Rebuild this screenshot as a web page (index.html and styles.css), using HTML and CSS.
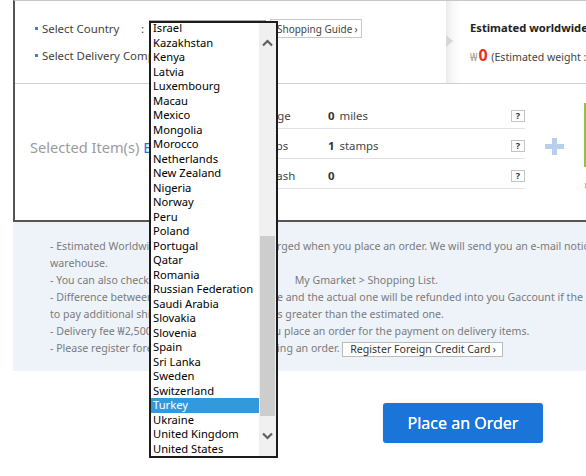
FILE: index.html
```html
<!DOCTYPE html>
<html lang="en">
<head>
<meta charset="utf-8">
<title>Order</title>
<link rel="stylesheet" href="styles.css">
</head>
<body>
<div class="page">
  <div class="order-box">
    <div class="top">
      <div class="select-area">
        <div class="sel-row">
          <span class="bullet"></span><span class="sel-label">Select Country</span><span class="colon">:</span>
          <span class="select-ph">Turkey</span>
          <span class="btn-small guide">Shopping Guide<span class="chev">›</span></span>
        </div>
        <div class="sel-row">
          <span class="bullet"></span><span class="sel-label">Select Delivery Company</span>
        </div>
      </div>
      <div class="estimate">
        <div class="est-title">Estimated worldwide shipping fee</div>
        <div class="est-value"><span class="won">₩</span><span class="zero">0</span> (Estimated weight : 0kg)</div>
      </div>
    </div>
    <div class="middle">
      <div class="selected">Selected Item(s) <span class="blue">E</span></div>
      <div class="benefits">
        <div class="brow"><span class="blabel">G Mileage</span><span class="bval"><b>0</b> miles</span><span class="qbox">?</span></div>
        <div class="brow"><span class="blabel">G Stamps</span><span class="bval"><b>1</b> stamps</span><span class="qbox">?</span></div>
        <div class="brow"><span class="blabel">Smile Cash</span><span class="bval"><b>0</b></span><span class="qbox">?</span></div>
      </div>
      <svg class="plus" width="19" height="17" viewBox="0 0 19 17"><rect x="0" y="6" width="19" height="5" fill="#b7cfe8"/><rect x="7" y="0" width="5" height="17" fill="#b7cfe8"/></svg>
      <div class="side">
        <div class="green-box"></div>
        <div class="side-note">₩0</div>
      </div>
    </div>
  </div>

  <div class="notice">
    <div class="nline">- Estimated Worldwide delivery fee will be charged when you place an order. We will send you an e-mail notice when the items arrive at the overseas</div>
    <div class="nline">warehouse.</div>
    <div class="nline">- You can also check the shipping fee later in <span class="path">My Gmarket &gt; Shopping List.</span></div>
    <div class="nline">- Difference between the predicted delivery fee and the actual one will be refunded into you Gaccount if the actual one is less, and you will have</div>
    <div class="nline">to pay additional shipping fee if the final one is greater than the estimated one.</div>
    <div class="nline">- Delivery fee ₩2,500 will be charged when you place an order for the payment on delivery items.</div>
    <div class="nline">- Please register foreign credit card when placing an order. <span class="btn-small card">Register Foreign Credit Card<span class="chev">›</span></span></div>
  </div>

  <div class="actions">
    <span class="place-btn">Place an Order</span>
  </div>
</div>

<div class="dropdown">
  <div class="opts">
    <ul>
      <li>Israel</li>
      <li>Kazakhstan</li>
      <li>Kenya</li>
      <li>Latvia</li>
      <li>Luxembourg</li>
      <li>Macau</li>
      <li>Mexico</li>
      <li>Mongolia</li>
      <li>Morocco</li>
      <li>Netherlands</li>
      <li>New Zealand</li>
      <li>Nigeria</li>
      <li>Norway</li>
      <li>Peru</li>
      <li>Poland</li>
      <li>Portugal</li>
      <li>Qatar</li>
      <li>Romania</li>
      <li>Russian Federation</li>
      <li>Saudi Arabia</li>
      <li>Slovakia</li>
      <li>Slovenia</li>
      <li>Spain</li>
      <li>Sri Lanka</li>
      <li>Sweden</li>
      <li>Switzerland</li>
      <li class="sel">Turkey</li>
      <li>Ukraine</li>
      <li>United Kingdom</li>
      <li>United States</li>
    </ul>
  </div>
  <div class="sbar">
    <div class="sbtn"><svg width="11" height="8" viewBox="0 0 11 8"><polyline points="1,6.5 5.5,2 10,6.5" fill="none" stroke="#5f5f5f" stroke-width="2.2"/></svg></div>
    <div class="track"><div class="thumb"></div></div>
    <div class="sbtn"><svg width="11" height="8" viewBox="0 0 11 8"><polyline points="1,1.5 5.5,6 10,1.5" fill="none" stroke="#5f5f5f" stroke-width="2.2"/></svg></div>
  </div>
</div>
</body>
</html>
```

FILE: styles.css
```css
html, body {
  margin: 0;
  padding: 0;
  overflow: hidden;
  background: #fff;
}
body {
  font-family: "Noto Sans", "DejaVu Sans", sans-serif;
  color: #333;
  width: 586px;
  height: 476px;
  position: relative;
}
.page {
  width: 820px;
}

/* ---------- order box ---------- */
.order-box {
  margin-left: 13px;
  width: 790px;
  border-top: 1px solid #c8c8c8;
  border-left: 2px solid #555;
  border-bottom: 2px solid #555;
}
.top {
  display: flex;
  height: 82px;
  border-bottom: 1px solid #cfcfcf;
}
.select-area {
  width: 431px;
  padding-top: 14px;
  padding-left: 20px;
  box-sizing: border-box;
}
.sel-row {
  display: flex;
  align-items: center;
  height: 27px;
  font-size: 11.4px;
  color: #3f3f3f;
  white-space: nowrap;
}
.bullet {
  width: 3px;
  height: 3px;
  background: #3b7fd6;
  margin-right: 4px;
}
.sel-label {
  width: 99px;
}
.colon {
  width: 4px;
}
.select-ph {
  margin-left: 4px;
  width: 117px;
  height: 18px;
  border: 1px solid #aaa;
  box-sizing: border-box;
  font-size: 11px;
  line-height: 16px;
  padding-left: 3px;
}
.btn-small {
  display: inline-flex;
  align-items: center;
  border: 1px solid #c9c9c9;
  background: #fff;
  color: #444;
  box-sizing: border-box;
  white-space: nowrap;
}
.guide {
  margin-left: 4px;
  height: 19px;
  padding: 0 4px 0 6px;
  font-size: 10px;
}
.chev {
  margin-left: 2px;
  font-size: 10px;
}
.estimate {
  flex: 1;
  position: relative;
  background: linear-gradient(to right, #ebebeb 0, #f7f7f7 6px, #fff 14px);
  padding: 19px 0 0 24px;
  white-space: nowrap;
}
.estimate::before {
  content: "";
  position: absolute;
  left: 0;
  top: 34px;
  border-left: 7px solid #d6d6d6;
  border-top: 6px solid transparent;
  border-bottom: 6px solid transparent;
}
.est-title {
  font-weight: 700;
  font-size: 11.2px;
  line-height: 16px;
  color: #222;
}
.est-value {
  margin-top: 9px;
  font-size: 10.6px;
  line-height: 20px;
  color: #444;
}
.won {
  color: #999;
  font-size: 11px;
}
.zero {
  color: #e8321e;
  font-weight: 700;
  font-size: 16px;
  margin: 0 1px;
}

/* ---------- middle ---------- */
.middle {
  display: flex;
  align-items: flex-start;
  height: 136px;
}
.selected {
  width: 207px;
  margin: 53px 0 0 15px;
  font-size: 14.6px;
  line-height: 20px;
  color: #9b9b9b;
  white-space: nowrap;
}
.selected .blue {
  color: #1b74d8;
}
.benefits {
  width: 288px;
  margin-top: 15px;
}
.brow {
  display: flex;
  align-items: flex-start;
  height: 29px;
  border-bottom: 1px solid #e2e2e2;
  font-size: 11.4px;
  color: #444;
}
.blabel {
  width: 91px;
  padding-top: 10px;
  line-height: 14px;
  white-space: nowrap;
}
.bval {
  flex: 1;
  padding-top: 10px;
  line-height: 14px;
}
.bval b {
  color: #333;
  margin-right: 2px;
}
.qbox {
  margin-top: 11px;
  width: 14px;
  height: 12px;
  box-sizing: border-box;
  border: 1px solid #c4c4c4;
  font-size: 9px;
  font-weight: 700;
  line-height: 10px;
  text-align: center;
  color: #333;
}
.plus {
  margin: 54px 0 0 20px;
}
.side {
  margin: 19px 0 0 20px;
  width: 120px;
}
.green-box {
  height: 64px;
  border-left: 2px solid #8cc63f;
}
.side-note {
  margin-top: 14px;
  color: #f08a00;
  font-size: 11px;
  font-weight: 700;
  line-height: 12px;
  padding-left: 1px;
}

/* ---------- notice ---------- */
.notice {
  margin-left: 13px;
  width: 790px;
  background: #eef3fa;
  padding: 16px 0 14px 37px;
  box-sizing: border-box;
  font-size: 10.6px;
  line-height: 17px;
  color: #7a7a7a;
}
.nline {
  white-space: nowrap;
  height: 17px;
}
.path {
  margin-left: 22px;
}
.card {
  height: 15px;
  padding: 0 6px 0 7px;
  font-size: 10.6px;
  vertical-align: middle;
  color: #333;
  border-color: #bcbcbc;
}

/* ---------- actions ---------- */
.actions {
  padding: 32px 0 0 383px;
}
.place-btn {
  display: flex;
  align-items: center;
  justify-content: center;
  width: 160px;
  height: 40px;
  background: #1b74d8;
  border-radius: 3px;
  color: #fff;
  font-size: 16px;
  text-shadow: 0 0 0.4px #fff;
  box-shadow: 0 0 6px rgba(0, 0, 0, 0.06);
}

/* ---------- open dropdown list ---------- */
.dropdown {
  position: absolute;
  left: 149px;
  top: 21px;
  width: 129px;
  height: 437px;
  box-sizing: border-box;
  border: 2px solid #1c1c1c;
  background: #fff;
  display: flex;
  overflow: hidden;
  z-index: 10;
}
.opts {
  width: 108px;
  overflow: hidden;
}
.opts ul {
  list-style: none;
  margin: -2px 0 0 0;
  padding: 0;
}
.opts li {
  height: 14.5px;
  line-height: 14.5px;
  padding-left: 2px;
  font-size: 11.2px;
  color: #000;
  white-space: nowrap;
}
.opts li.sel {
  background: #3399dd;
  color: #fff;
}
.sbar {
  width: 17px;
  background: #f0f0f0;
  display: flex;
  flex-direction: column;
}
.sbtn {
  height: 40px;
  display: flex;
  align-items: center;
  justify-content: center;
}
.track {
  flex: 1;
  display: flex;
  flex-direction: column;
}
.thumb {
  margin: 173px 0 0 1px;
  width: 15px;
  flex: 1;
  background: #cdcdcd;
}
```
